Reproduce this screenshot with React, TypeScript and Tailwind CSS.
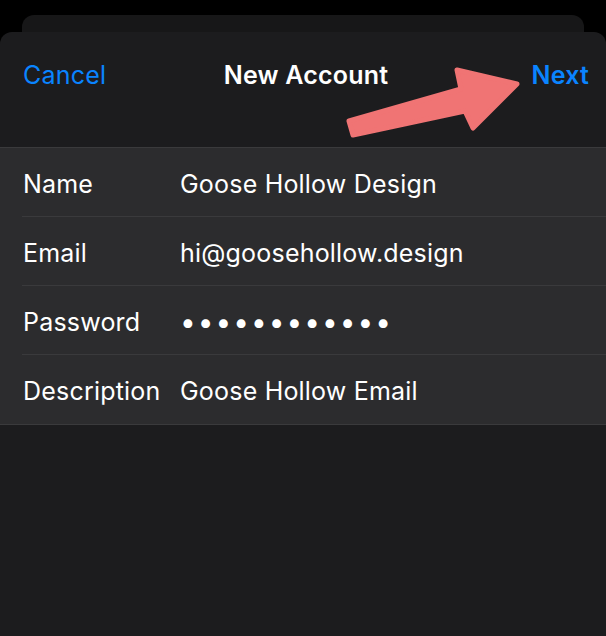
const rows = [
  { label: "Name", value: "Goose Hollow Design" },
  { label: "Email", value: "hi@goosehollow.design" },
  { label: "Password", value: "••••••••••••", secret: true },
  { label: "Description", value: "Goose Hollow Email" },
];

const App: React.FC = () => {
  return (
    <main
      className="w-[606px] h-[636px] bg-black flex flex-col overflow-hidden text-white"
      style={{ fontFamily: "Inter, 'Noto Sans', sans-serif" }}
    >
      {/* sheet behind */}
      <div className="mx-[22px] mt-[15px] h-[17px] shrink-0 rounded-t-[12px] bg-[#171718]" />

      {/* front sheet */}
      <div className="relative flex-1 rounded-t-[12px] bg-[#1c1c1e]">
        <header className="h-[115px] grid grid-cols-[1fr_auto_1fr] items-start pl-[23px] pr-[17px] pt-[28px] text-[25px] leading-[30px] tracking-[0.2px]">
          <button className="justify-self-start text-[#0a84ff]">Cancel</button>
          <h1 className="font-semibold text-white">New Account</h1>
          <button className="justify-self-end font-semibold text-[#0a84ff]">Next</button>
        </header>

        {/* annotation arrow */}
        <svg
          className="absolute left-0 top-0 pointer-events-none"
          width="606"
          height="150"
          viewBox="0 32 606 150"
        >
          <path
            d="M349 121 L461 89 L457 70 L517 84 L473 128 L465 111 L353 135 Z"
            fill="#f07474"
            stroke="#f07474"
            strokeWidth="5"
            strokeLinejoin="round"
          />
        </svg>

        <section className="border-y border-[#3a3a3c] bg-[#2c2c2e]">
          {rows.map((row, i) => (
            <div key={row.label} className="pl-[22px]">
              <div
                className={
                  "h-[69px] flex items-center pt-[3px] text-[25px] leading-[30px] tracking-[0.2px] " +
                  (i < rows.length - 1 ? "border-b border-[#3a3a3c]" : "")
                }
              >
                <span className="w-[158px] pl-[1px] text-white">{row.label}</span>
                {row.secret ? (
                  <span className="text-[28px] leading-[30px] tracking-[2px] text-white">{row.value}</span>
                ) : (
                  <span className="text-white">{row.value}</span>
                )}
              </div>
            </div>
          ))}
        </section>
      </div>
    </main>
  );
};

export default App;
